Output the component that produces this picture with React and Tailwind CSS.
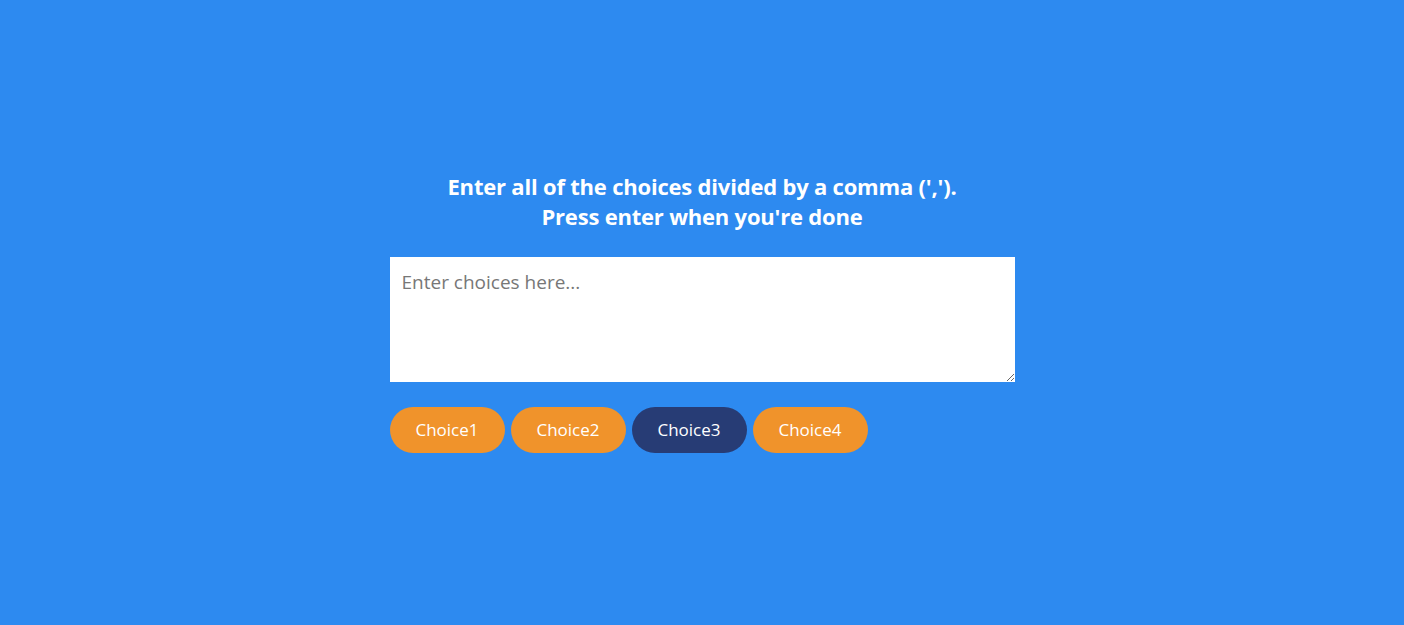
export default function App() {
  const choices = [
    { label: "Choice1", active: false },
    { label: "Choice2", active: false },
    { label: "Choice3", active: true },
    { label: "Choice4", active: false },
  ];
  return (
    <div className="min-h-screen w-full bg-[#2d8af0] flex items-center justify-center font-['Open_Sans','Noto_Sans',sans-serif]">
      <div className="w-[625px] flex flex-col">
        <h3 className="text-white text-[22px] font-bold leading-[30px] text-center tracking-[-0.2px] -mt-[2px]">
          Enter all of the choices divided by a comma (',').
          <br />
          Press enter when you're done
        </h3>
        <textarea
          placeholder="Enter choices here..."
          className="mt-[26px] h-[125px] w-full bg-white px-3 py-3 text-[19px] leading-[26px] text-gray-800 placeholder:text-[#777] outline-none block"
        />
        <div className="mt-[25px] flex gap-[6px]">
          {choices.map((c) => (
            <span
              key={c.label}
              className={`w-[115px] h-[46px] rounded-full flex items-center justify-center text-white text-[17px] ${
                c.active ? "bg-[#273c75]" : "bg-[#f0932b]"
              }`}
            >
              {c.label}
            </span>
          ))}
        </div>
      </div>
    </div>
  );
}
